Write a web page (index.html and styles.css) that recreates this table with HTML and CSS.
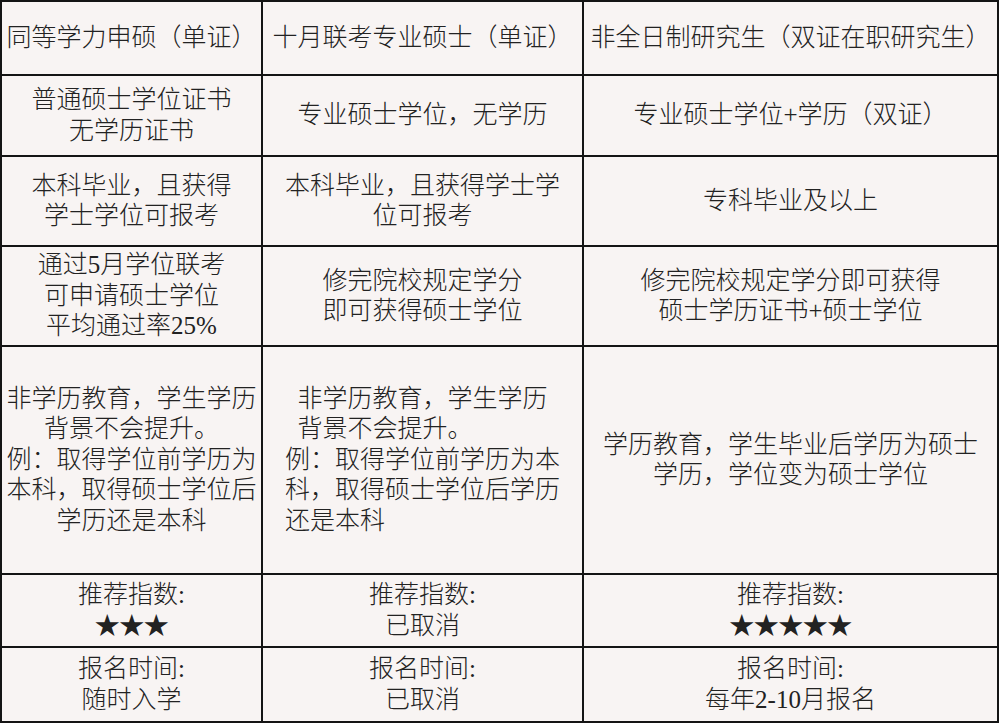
FILE: index.html
```html
<!DOCTYPE html>
<html lang="zh-CN">
<head>
<meta charset="utf-8">
<title>对比表</title>
<link rel="stylesheet" href="styles.css">
</head>
<body>
<div class="table">
  <div class="cell">同等学力申硕（单证）</div>
  <div class="cell">十月联考专业硕士（单证）</div>
  <div class="cell">非全日制研究生（双证在职研究生）</div>

  <div class="cell"><p>普通硕士学位证书<br>无学历证书</p></div>
  <div class="cell"><p>专业硕士学位，无学历</p></div>
  <div class="cell"><p>专业硕士学位+学历（双证）</p></div>

  <div class="cell"><p>本科毕业，且获得<br>学士学位可报考</p></div>
  <div class="cell"><p>本科毕业，且获得学士学<br>位可报考</p></div>
  <div class="cell"><p>专科毕业及以上</p></div>

  <div class="cell"><p>通过5月学位联考<br>可申请硕士学位<br>平均通过率25%</p></div>
  <div class="cell"><p>修完院校规定学分<br>即可获得硕士学位</p></div>
  <div class="cell"><p>修完院校规定学分即可获得<br>硕士学历证书+硕士学位</p></div>

  <div class="cell"><p>非学历教育，学生学历<br>背景不会提升。<br>例：取得学位前学历为<br>本科，取得硕士学位后<br>学历还是本科</p></div>
  <div class="cell"><p class="left">非学历教育，学生学历<br>背景不会提升。</p><p class="left">例：取得学位前学历为本<br>科，取得硕士学位后学历<br>还是本科</p></div>
  <div class="cell"><p>学历教育，学生毕业后学历为硕士<br>学历，学位变为硕士学位</p></div>

  <div class="cell"><p>推荐指数:<br><span class="stars">★★★</span></p></div>
  <div class="cell"><p>推荐指数:<br>已取消</p></div>
  <div class="cell"><p>推荐指数:<br><span class="stars">★★★★★</span></p></div>

  <div class="cell"><p>报名时间:<br>随时入学</p></div>
  <div class="cell"><p>报名时间:<br>已取消</p></div>
  <div class="cell"><p>报名时间:<br>每年2-10月报名</p></div>
</div>
</body>
</html>
```
FILE: styles.css
```css
html, body {
  margin: 0;
  padding: 0;
  background: #f8f4f3;
}

.table {
  width: 999px;
  height: 723px;
  box-sizing: border-box;
  padding: 2px;
  background: #141414;
  display: grid;
  grid-template-columns: 259px 319px 413px;
  grid-template-rows: 72px 79px 88px 98px 226px 71px 73px;
  gap: 2px;
  font-family: "Liberation Serif", "Noto Sans CJK SC", serif;
  font-size: 25px;
  font-weight: 300;
  line-height: 30.5px;
  color: #222222;
}

.cell {
  background: #f8f4f3;
  display: flex;
  flex-direction: column;
  align-items: center;
  justify-content: center;
  text-align: center;
  white-space: nowrap;
  overflow: hidden;
}

.cell p {
  margin: 0;
}

.cell p.left {
  text-align: left;
}

.stars {
  letter-spacing: -0.5px;
}
```
